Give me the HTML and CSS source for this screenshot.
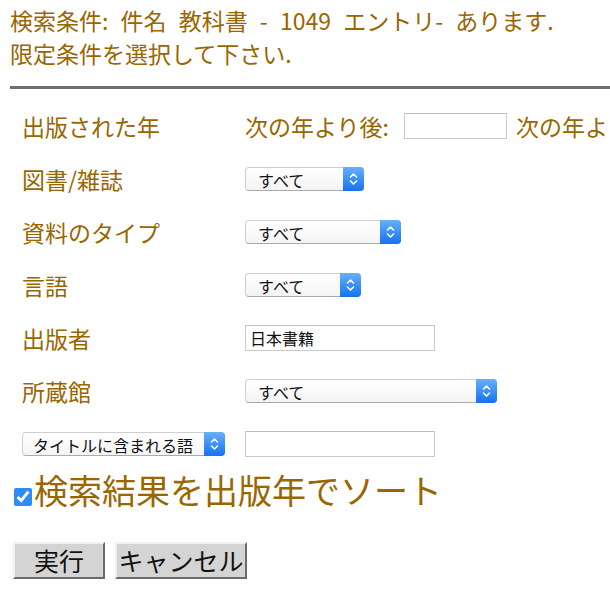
FILE: index.html
```html
<!DOCTYPE html>
<html lang="ja">
<head>
  <meta charset="UTF-8" />
  <meta name="viewport" content="width=device-width, initial-scale=1.0"/>
  <title>検索条件の限定</title>
  <link rel="stylesheet" href="styles.css">
</head>
<body>

  <p class="summary">
    検索条件: 件名 教科書 - 1049 エントリ- あります.<br>
    限定条件を選択して下さい.
  </p>

  <hr class="rule">

  <form class="filters">
    <div class="label">出版された年</div>
    <div class="field years">
      <span class="year-from">次の年より後:</span>
      <input type="text" class="year">
      <span>次の年より前:</span>
      <input type="text" class="year">
    </div>

    <div class="label">図書/雑誌</div>
    <div class="field">
      <span class="sel sel-kind">
        <select><option>すべて</option><option>図書</option><option>雑誌</option></select>
        <span class="sel-arrow"><svg viewBox="0 0 21 24" width="21" height="24"><path d="M7.5 10 L10.5 7 L13.5 10 M7.5 14 L10.5 17 L13.5 14" fill="none" stroke="#fff" stroke-width="1.6" stroke-linecap="round" stroke-linejoin="round"/></svg></span>
      </span>
    </div>

    <div class="label">資料のタイプ</div>
    <div class="field">
      <span class="sel sel-type">
        <select><option>すべて</option></select>
        <span class="sel-arrow"><svg viewBox="0 0 21 24" width="21" height="24"><path d="M7.5 10 L10.5 7 L13.5 10 M7.5 14 L10.5 17 L13.5 14" fill="none" stroke="#fff" stroke-width="1.6" stroke-linecap="round" stroke-linejoin="round"/></svg></span>
      </span>
    </div>

    <div class="label">言語</div>
    <div class="field">
      <span class="sel sel-lang">
        <select><option>すべて</option></select>
        <span class="sel-arrow"><svg viewBox="0 0 21 24" width="21" height="24"><path d="M7.5 10 L10.5 7 L13.5 10 M7.5 14 L10.5 17 L13.5 14" fill="none" stroke="#fff" stroke-width="1.6" stroke-linecap="round" stroke-linejoin="round"/></svg></span>
      </span>
    </div>

    <div class="label">出版者</div>
    <div class="field">
      <input type="text" class="text" value="日本書籍">
    </div>

    <div class="label">所蔵館</div>
    <div class="field">
      <span class="sel sel-library">
        <select><option>すべて</option></select>
        <span class="sel-arrow"><svg viewBox="0 0 21 24" width="21" height="24"><path d="M7.5 10 L10.5 7 L13.5 10 M7.5 14 L10.5 17 L13.5 14" fill="none" stroke="#fff" stroke-width="1.6" stroke-linecap="round" stroke-linejoin="round"/></svg></span>
      </span>
    </div>

    <div class="label last">
      <span class="sel sel-word">
        <select><option>タイトルに含まれる語</option></select>
        <span class="sel-arrow"><svg viewBox="0 0 21 24" width="21" height="24"><path d="M7.5 10 L10.5 7 L13.5 10 M7.5 14 L10.5 17 L13.5 14" fill="none" stroke="#fff" stroke-width="1.6" stroke-linecap="round" stroke-linejoin="round"/></svg></span>
      </span>
    </div>
    <div class="field last">
      <input type="text" class="text">
    </div>
  </form>

  <label class="sort">
    <input type="checkbox" checked>検索結果を出版年でソート
  </label>

  <div class="actions">
    <button class="btn btn-run">実行</button>
    <button class="btn btn-cancel">キャンセル</button>
  </div>

</body>
</html>
```

FILE: styles.css
```css
html, body {
  overflow: hidden;
}

body {
  margin: 0;
  padding: 0 0 0 10px;
  background: #fff;
  color: #996600;
  font-family: "Noto Sans CJK JP", "Noto Sans", sans-serif;
}

.summary {
  margin: 4px 0 0;
  font-size: 23px;
  line-height: 33px;
  word-spacing: 7px;
  white-space: nowrap;
}

.rule {
  margin: 16px 0 0;
  border: none;
  border-top: 3px solid #6e6e6e;
}

.filters {
  display: grid;
  grid-template-columns: 223px 1fr;
  grid-auto-rows: 53px;
  align-items: center;
  margin-top: 10px;
  padding-left: 12px;
}

.label {
  font-size: 23px;
  line-height: 30px;
  white-space: nowrap;
}

.label.last,
.field.last {
  height: 43px;
  display: flex;
  align-items: center;
}

.years {
  display: flex;
  align-items: center;
  gap: 9px;
  font-size: 23px;
  white-space: nowrap;
}

.year-from {
  margin-right: 6px;
}

input[type="text"] {
  box-sizing: border-box;
  height: 26px;
  margin: 0;
  padding: 0 4px;
  border: 1px solid #cbcbcb;
  border-top-color: #bdbdbd;
  font-family: "Noto Sans CJK JP", sans-serif;
  font-size: 16px;
  color: #111;
  background: #fff;
}

.year {
  width: 103px;
  height: 25px;
}

.text {
  width: 190px;
}

.sel {
  position: relative;
  display: block;
  height: 24px;
}

.sel select {
  appearance: none;
  -webkit-appearance: none;
  display: block;
  box-sizing: border-box;
  height: 24px;
  width: 100%;
  margin: 0;
  padding: 0 24px 0 12px;
  border: 1px solid #cfcfcf;
  border-bottom-color: #ababab;
  border-radius: 4px;
  background: linear-gradient(#ffffff, #f4f4f4);
  font-family: "Noto Sans CJK JP", sans-serif;
  font-size: 16px;
  color: #111;
}

.sel-arrow {
  position: absolute;
  top: 0;
  right: 0;
  width: 21px;
  height: 24px;
  border-radius: 0 4px 4px 0;
  background: linear-gradient(#66b0fb, #1572f0);
  pointer-events: none;
}

.sel-arrow svg {
  display: block;
}

.sel-kind { width: 119px; }
.sel-type { width: 156px; }
.sel-lang { width: 116px; }
.sel-library { width: 252px; }
.sel-word { width: 203px; }

.sel-word select {
  padding-left: 10px;
}

.sort {
  display: block;
  margin-top: 0;
  font-size: 34px;
  line-height: 40px;
  white-space: nowrap;
}

.sort input {
  width: 18px;
  height: 18px;
  margin: 0 2px 0 4px;
  accent-color: #2e8cf8;
  vertical-align: -2px;
}

.actions {
  display: flex;
  gap: 10px;
  margin-top: 32px;
  padding-left: 3px;
}

.btn {
  box-sizing: border-box;
  height: 37px;
  padding: 0;
  border: 2px solid;
  border-color: #f0f0f0 #6a6a6a #6a6a6a #f0f0f0;
  background: #d4d4d4;
  color: #111;
  font-family: "Noto Sans CJK JP", sans-serif;
  font-size: 25px;
  line-height: 33px;
}

.btn-run { width: 92px; }
.btn-cancel { width: 132px; }
```
